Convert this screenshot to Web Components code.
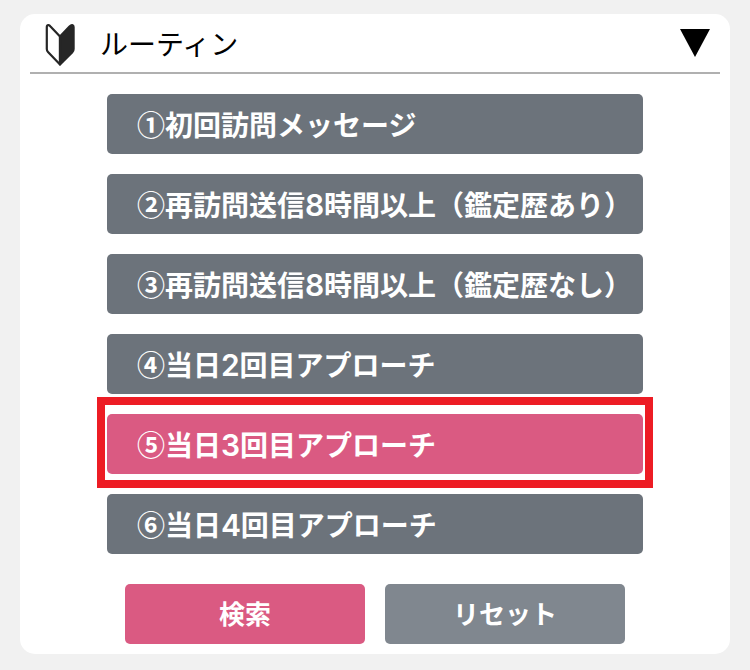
<!DOCTYPE html>
<html lang="ja"><head><meta charset="utf-8"><title>ルーティン</title>
<style>body{margin:0;background:#f1f1f1;font-family:"Noto Sans CJK JP",sans-serif}
routine-item span{font-family:Inter,"Liberation Sans",sans-serif;font-weight:600;font-size:30px;line-height:1;letter-spacing:-.2px}</style></head>
<body>
<routine-panel>
<panel-header slot="head">ルーティン</panel-header>
<routine-item>①初回訪問メッセージ</routine-item>
<routine-item>②再訪問送信<span>8</span>時間以上（鑑定歴あり）</routine-item>
<routine-item>③再訪問送信<span>8</span>時間以上（鑑定歴なし）</routine-item>
<routine-item>④当日<span>2</span>回目アプローチ</routine-item>
<routine-item selected>⑤当日<span>3</span>回目アプローチ</routine-item>
<routine-item>⑥当日<span>4</span>回目アプローチ</routine-item>
<action-button slot="actions" primary>検索</action-button>
<action-button slot="actions">リセット</action-button>
</routine-panel>
<script>
const define=(name,html)=>customElements.define(name,class extends HTMLElement{
  constructor(){super();this.attachShadow({mode:'open'}).innerHTML=html}
});
define('routine-panel',`<style>
:host{display:block;box-sizing:border-box;width:710px;height:640px;margin:14px 20px 16px;padding:0 10px;background:#fff;border-radius:15px}
.wrap{display:flow-root}
.list{display:flex;flex-direction:column;align-items:center;gap:20px;padding-top:20px}
.actions{display:flex;justify-content:center;gap:20px;padding-top:30px}
</style><div class="wrap"><slot name="head"></slot><div class="list"><slot></slot></div><div class="actions"><slot name="actions"></slot></div></div>`);
define('panel-header',`<style>
:host{display:flex;box-sizing:border-box;height:60px;border-bottom:2px solid #b0b0b0;align-items:center;font-size:28px;line-height:40px;color:#000}
svg{display:block;flex:none}.mark{margin-left:14px;margin-right:24px}.label{flex:1;white-space:nowrap;padding-bottom:1px}.arrow{margin-right:10px}
</style><svg class="mark" width="32" height="48" viewBox="0 0 32 48"><g stroke="#262626" stroke-width="2.2" stroke-linejoin="round"><path d="M2.8 8Q2.8 6 4.5 6.2Q5.5 6.3 6.5 7.5L16 17.5V45.5L4 33Q2.8 31.7 2.8 30Z" fill="#fff"/><path d="M16 17.5L25.5 7.5Q27 6 28.3 6.2Q29.6 6.4 29.6 8V30Q29.6 32 28.3 33.2L16 45.5Z" fill="#262626"/></g></svg><span class="label"><slot></slot></span><svg class="arrow" width="30" height="28"><path d="M0 0H30L15 28Z"/></svg>`);
define('routine-item',`<style>
:host{display:block;position:relative;box-sizing:border-box;width:536px;height:60px;padding:10px 0 0 30px;border-radius:5px;background:#6c737b;color:#fff;font-weight:700;font-size:28px;line-height:40px;white-space:nowrap}
:host([selected]){background:#da5a82}
.ring{display:none}:host([selected]) .ring{display:block;position:absolute;left:-10px;top:-17px;width:540px;height:75px;border:8px solid #ed1c24}
</style><slot></slot><i class="ring"></i>`);
define('action-button',`<style>
:host{display:flex;box-sizing:border-box;width:240px;height:60px;padding-bottom:2px;align-items:center;justify-content:center;border-radius:5px;background:#80878f;color:#fff;font-weight:700;font-size:26px;line-height:40px}
:host([primary]){background:#da5a82}
</style><slot></slot>`);
</script></body></html>
